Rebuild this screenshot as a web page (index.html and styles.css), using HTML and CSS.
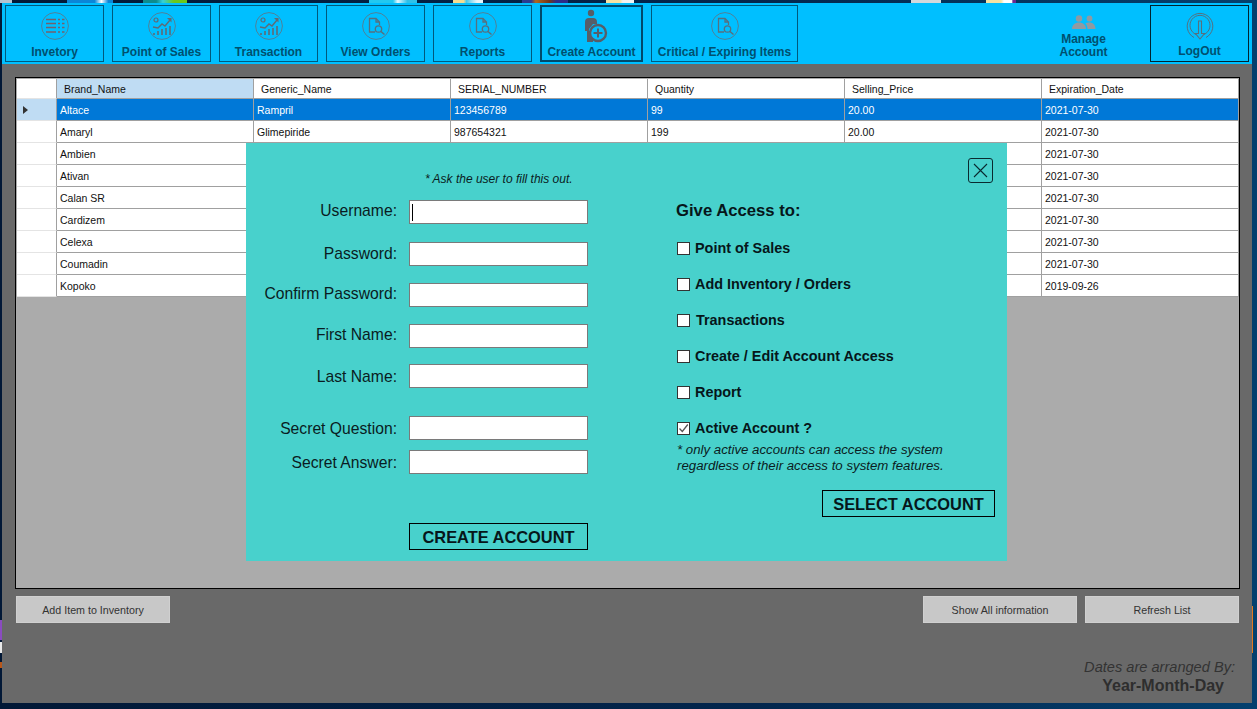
FILE: index.html
```html
<!DOCTYPE html>
<html lang="en">
<head>
<meta charset="utf-8">
<title>Create Account</title>
<link rel="stylesheet" href="styles.css">
</head>
<body>
<svg class="defs" width="0" height="0" aria-hidden="true">
  <symbol id="i-list" viewBox="0 0 28 28">
    <circle cx="14" cy="14" r="13.4" fill="none" stroke="#4f8199" stroke-width="1"/>
    <g fill="none" stroke="#75606c" stroke-width="1.3">
      <path d="M5 7.500h10M17 7.500h2M21 7.500h2.500M5 11.500h10M17 11.500h2M21 11.500h2.500M5 15.500h10M17 15.500h2M21 15.500h2.500M5 20h10M17 20h2M21 20h2.500"/>
    </g>
  </symbol>
  <symbol id="i-chart" viewBox="0 0 28 28">
    <circle cx="14" cy="14" r="13.4" fill="none" stroke="#4f8199" stroke-width="1"/>
    <circle cx="8" cy="8" r="2" fill="none" stroke="#5f6a76" stroke-width="1.2"/>
    <path d="M5 15l5 1 4-4 3 2 5-6" fill="none" stroke="#5f6a76" stroke-width="1.4"/>
    <path d="M19 6h4.500v4.500z" fill="#5f6a76"/>
    <path d="M6 23v-2M10 23v-4M14 23v-6M18 23v-7M22 23v-9" fill="none" stroke="#5f6a76" stroke-width="1.6"/>
  </symbol>
  <symbol id="i-doc" viewBox="0 0 28 28">
    <circle cx="14" cy="14" r="13.4" fill="none" stroke="#4f8199" stroke-width="1"/>
    <path d="M13 20H7.500V6.500h6.500l3.500 3.500v3M14 6.500V10h3.500" fill="none" stroke="#56707f" stroke-width="1.300"/>
    <circle cx="16.500" cy="17" r="3.200" fill="none" stroke="#56707f" stroke-width="1.300"/>
    <path d="M19 19.500l3.500 3" stroke="#56707f" stroke-width="1.600"/>
  </symbol>
  <symbol id="i-new" viewBox="0 0 24 34">
    <circle cx="6" cy="4" r="3.200" fill="#565e68"/>
    <path d="M0 13a4 4 0 0 1 4-4h4a4 4 0 0 1 4 4v2H8L4 20v13H2V22H0z" fill="#565e68"/>
    <path d="M2 22h6v11H2z" fill="#565e68"/>
    <circle cx="13" cy="24" r="8" fill="#00bfff" stroke="#565e68" stroke-width="2.400"/>
    <path d="M13 19.500v9M8.500 24h9" stroke="#565e68" stroke-width="2"/>
  </symbol>
  <symbol id="i-people" viewBox="0 0 24 15">
    <circle cx="7" cy="3.500" r="3.200" fill="#8f9aa2"/>
    <circle cx="17.500" cy="3.500" r="2.900" fill="#8f9aa2"/>
    <path d="M0 14c0-4 3-6.500 7-6.500s7 2.500 7 6.500z" fill="#8f9aa2"/>
    <path d="M15.500 14c0-2.500-.8-4.500-2.200-5.800 1-.5 2.500-.7 4-.7 3.800 0 6.200 2.500 6.200 6.500z" fill="#8f9aa2"/>
  </symbol>
  <symbol id="i-logout" viewBox="0 0 28 30">
    <path d="M8 25.500a12.800 12.800 0 1 1 12 0M10 22.500a10 10 0 1 1 8 0" fill="none" stroke="#56707f" stroke-width="1"/>
    <path d="M12.500 9h3v12.500h3L14 27l-4.500-5.500h3z" fill="none" stroke="#56707f" stroke-width="1.100"/>
  </symbol>
</svg>

<div class="wall">
  <span class="chip chip-a"></span><span class="chip chip-b"></span><span class="chip chip-c"></span><span class="chip chip-d"></span><span class="chip chip-e"></span><span class="chip chip-f"></span><span class="chip chip-g"></span><span class="chip chip-h"></span><span class="chip chip-i"></span>
</div>
<span class="edge edge-purple"></span>
<span class="edge edge-white"></span>
<span class="edge edge-orange"></span>
<span class="edge edge-right"></span>

<div class="app">
  <nav class="toolbar">
    <button class="tool"><svg class="ico"><use href="#i-list"/></svg><span class="tool-text">Invetory</span></button>
    <button class="tool"><svg class="ico"><use href="#i-chart"/></svg><span class="tool-text">Point of Sales</span></button>
    <button class="tool"><svg class="ico"><use href="#i-chart"/></svg><span class="tool-text">Transaction</span></button>
    <button class="tool"><svg class="ico"><use href="#i-doc"/></svg><span class="tool-text">View Orders</span></button>
    <button class="tool"><svg class="ico"><use href="#i-doc"/></svg><span class="tool-text">Reports</span></button>
    <button class="tool tool-active"><svg class="ico-new"><use href="#i-new"/></svg><span class="tool-text">Create Account</span></button>
    <button class="tool tool-wide"><svg class="ico"><use href="#i-doc"/></svg><span class="tool-text">Critical / Expiring Items</span></button>
    <button class="tool tool-plain"><svg class="ico-people"><use href="#i-people"/></svg><span class="tool-text tool-text-stack">Manage<br>Account</span></button>
    <button class="tool tool-logout"><svg class="ico-logout"><use href="#i-logout"/></svg><span class="tool-text">LogOut</span></button>
  </nav>

  <main class="content">
    <div class="grid-box">
      <table class="grid">
        <thead>
          <tr><th class="rowhead"></th><th class="col-on">Brand_Name</th><th>Generic_Name</th><th>SERIAL_NUMBER</th><th>Quantity</th><th>Selling_Price</th><th>Expiration_Date</th></tr>
        </thead>
        <tbody>
          <tr class="selected"><td class="rowhead"><span class="arrow"></span></td><td>Altace</td><td>Rampril</td><td>123456789</td><td>99</td><td>20.00</td><td>2021-07-30</td></tr>
          <tr><td class="rowhead"></td><td>Amaryl</td><td>Glimepiride</td><td>987654321</td><td>199</td><td>20.00</td><td>2021-07-30</td></tr>
          <tr><td class="rowhead"></td><td>Ambien</td><td></td><td></td><td></td><td></td><td>2021-07-30</td></tr>
          <tr><td class="rowhead"></td><td>Ativan</td><td></td><td></td><td></td><td></td><td>2021-07-30</td></tr>
          <tr><td class="rowhead"></td><td>Calan SR</td><td></td><td></td><td></td><td></td><td>2021-07-30</td></tr>
          <tr><td class="rowhead"></td><td>Cardizem</td><td></td><td></td><td></td><td></td><td>2021-07-30</td></tr>
          <tr><td class="rowhead"></td><td>Celexa</td><td></td><td></td><td></td><td></td><td>2021-07-30</td></tr>
          <tr><td class="rowhead"></td><td>Coumadin</td><td></td><td></td><td></td><td></td><td>2021-07-30</td></tr>
          <tr><td class="rowhead"></td><td>Kopoko</td><td></td><td></td><td></td><td></td><td>2019-09-26</td></tr>
        </tbody>
      </table>
    </div>

    <div class="actions">
      <button class="act">Add Item to Inventory</button>
      <span class="act-space"></span>
      <button class="act">Show All information</button>
      <button class="act">Refresh List</button>
    </div>

    <div class="note">
      <div class="note-a">Dates are arranged By:</div>
      <div class="note-b">Year-Month-Day</div>
    </div>
  </main>

  <section class="modal">
    <button class="close" aria-label="Close"><svg width="15" height="15" viewBox="0 0 15 15"><path d="M1 1l13 13M14 1L1 14" stroke="#0a2a30" stroke-width="1.100" fill="none"/></svg></button>
    <div class="form-col">
      <p class="hint">* Ask the user to fill this out.</p>
      <label class="row"><span class="row-label lift">Username:</span><input class="field field-focus" type="text"></label>
      <label class="row gap-18"><span class="row-label">Password:</span><input class="field" type="password"></label>
      <label class="row gap-17"><span class="row-label lift">Confirm Password:</span><input class="field" type="password"></label>
      <label class="row gap-17"><span class="row-label lift">First Name:</span><input class="field" type="text"></label>
      <label class="row gap-16"><span class="row-label drop">Last Name:</span><input class="field" type="text"></label>
      <label class="row gap-28"><span class="row-label drop">Secret Question:</span><input class="field" type="text"></label>
      <label class="row gap-10"><span class="row-label drop">Secret Answer:</span><input class="field" type="text"></label>
      <button class="outline outline-create">CREATE ACCOUNT</button>
    </div>
    <div class="access-col">
      <h2 class="access-title">Give Access to:</h2>
      <ul class="checks">
        <li class="check"><span class="box"></span>Point of Sales</li>
        <li class="check"><span class="box"></span>Add Inventory / Orders</li>
        <li class="check"><span class="box"></span><span class="nudge">Transactions</span></li>
        <li class="check"><span class="box"></span>Create / Edit Account Access</li>
        <li class="check"><span class="box"></span>Report</li>
        <li class="check"><span class="box"><svg width="11" height="11" viewBox="0 0 11 11"><path d="M1.500 5.500l2.800 3L9.800 1.500" fill="none" stroke="#555" stroke-width="1.300"/></svg></span>Active Account ?</li>
      </ul>
      <p class="warn">* only active accounts can access the system<br>regardless of their access to system features.</p>
      <button class="outline outline-select">SELECT ACCOUNT</button>
    </div>
  </section>
</div>
</body>
</html>
```

FILE: styles.css
```css
* { box-sizing: border-box; }

html, body { margin: 0; height: 100%; }

body {
  width: 1257px;
  height: 709px;
  overflow: hidden;
  padding: 3px 5px 6px 2px;
  position: relative;
  background: linear-gradient(90deg, #021836 0%, #03264d 60%, #04406e 100%);
  font-family: "Liberation Sans", Arial, sans-serif;
}

.defs { position: absolute; }

/* desktop icons peeking out around the window */
.wall { position: absolute; left: 0; top: 0; right: 0; height: 3px; display: flex; }
.chip { display: block; height: 3px; }
.chip-a { width: 12px; background: #b5c3cf; }
.chip-b { width: 46px; margin-left: 55px; background: linear-gradient(90deg, #0b86d8 60%, #fff 75%, #0b86d8 90%); }
.chip-c { width: 44px; margin-left: 30px; background: linear-gradient(90deg, #0e8c8c 30%, #35d0d8 45%, #6cc81c 70%); }
.chip-d { width: 48px; margin-left: 182px; background: linear-gradient(90deg, #22c8f0 50%, #e8f8ff 60%, #30c0e8 80%); }
.chip-e { width: 30px; margin-left: 36px; background: linear-gradient(90deg, #f5dc90 35%, #4cc8e8 45%, #e8f4f8 80%); }
.chip-f { width: 46px; margin-left: 39px; background: linear-gradient(90deg, #2a3a90 20%, #b0681c 30%, #70341c 60%, #2c2c88 75%); }
.chip-g { width: 28px; margin-left: 38px; background: linear-gradient(90deg, #f5e2a4 50%, #f2f2f2 60%); }
.chip-h { width: 30px; margin-left: 277px; background: #d4d8dc; }
.chip-i { width: 30px; margin-left: 45px; background: linear-gradient(90deg, #f5e2a4 50%, #fff 60%, #fff 85%, #6a2a90 90%); }

.edge { position: absolute; display: block; }
.edge-purple { left: 0; top: 620px; width: 2px; height: 20px; background: #8a4cc0; }
.edge-white { left: 0; top: 642px; width: 2px; height: 11px; background: #e8e8e8; }
.edge-orange { left: 0; top: 662px; width: 2px; height: 6px; background: #b8581c; }
.edge-right { left: 1252px; top: 606px; width: 1px; height: 47px; background: #e07a20; }

.app {
  position: relative;
  width: 1250px;
  height: 700px;
  background: #696969;
  display: flex;
  flex-direction: column;
}

/* toolbar */
.toolbar {
  height: 61px;
  flex: none;
  display: flex;
  gap: 8px;
  padding: 2px 3px;
  background: #00bfff;
}

.tool {
  width: 99px;
  height: 57px;
  padding: 6px 0 2px;
  display: flex;
  flex-direction: column;
  align-items: center;
  background: #00bfff;
  border: 1px solid #00597c;
  font-family: inherit;
  color: #00506f;
}

.tool-text {
  margin-top: auto;
  font-size: 12px;
  line-height: 14px;
  font-weight: 700;
  white-space: nowrap;
}

.tool-active { width: 103px; border: 2px solid #00496a; padding: 2px 0 1px; }
.tool-wide { width: 147px; }
.tool-plain { margin-left: auto; border-color: transparent; padding: 9px 0 2px; margin-right: 9px; }
.tool-text-stack { line-height: 13px; }
.tool-logout { border-color: #00222f; padding: 6px 0 3px; }

.ico { width: 28px; height: 28px; flex: none; }
.ico-new { width: 24px; height: 34px; flex: none; margin-left: 10px; }
.ico-people { width: 24px; height: 15px; flex: none; }
.ico-logout { width: 28px; height: 30px; flex: none; }

/* main */
.content { flex: 1; padding: 13px 12px 0 13px; }

.grid-box {
  height: 512px;
  padding: 1px 0 0 1px;
  border: 1px solid #000;
  background: #ababab;
}

.grid {
  border-collapse: separate;
  border-spacing: 0;
  table-layout: fixed;
  width: 1222px;
  font-size: 10.500px;
  color: #111;
}

.grid th, .grid td {
  width: 197px;
  height: 22px;
  padding: 0 0 0 3px;
  text-align: left;
  font-weight: 400;
  background: #fff;
  border-right: 1px solid #a0a0a0;
  border-bottom: 1px solid #a0a0a0;
  white-space: nowrap;
  overflow: hidden;
}

.grid th { height: 20px; padding-left: 7px; font-size: 10.500px; }

.grid th.rowhead, .grid td.rowhead {
  width: 40px;
  padding: 0 0 0 6px;
  border-bottom-color: #e4e4e4;
}

.grid th.col-on { background: #bfdcf3; }

.selected td { background: #0078d7; color: #fff; }
.grid .selected td.rowhead { background: #bfdcf3; }

.arrow {
  display: block;
  width: 0;
  height: 0;
  border-left: 5px solid #333;
  border-top: 4px solid transparent;
  border-bottom: 4px solid transparent;
}

.actions { display: flex; gap: 8px; margin: 7px 0 0 1px; height: 27px; width: 1223px; }
.act-space { flex: 1; }

.act {
  width: 154px;
  height: 27px;
  padding: 0;
  background: #c8c8c8;
  border: 1px solid #d0d0d0;
  font-family: inherit;
  font-size: 10.700px;
  color: #333;
}

.note {
  width: 1220px;
  margin-top: 35px;
  text-align: right;
  color: #333;
}

.note-a { font-size: 14.600px; line-height: 18px; font-style: italic; }
.note-b { font-size: 16px; line-height: 18px; font-weight: 700; padding: 1px 11px 0 0; color: #2e2e2e; }

/* modal */
.modal {
  position: absolute;
  left: 244px;
  top: 140px;
  width: 761px;
  height: 418px;
  display: flex;
  padding-top: 28px;
  background: #48d1cc;
  color: #0a1c22;
}

.close {
  position: absolute;
  left: 722px;
  top: 15px;
  width: 25px;
  height: 25px;
  padding: 0;
  display: flex;
  align-items: center;
  justify-content: center;
  background: transparent;
  border: 1px solid #0a2a30;
  border-radius: 3px;
}

.form-col { width: 342px; flex: none; }

.hint {
  margin: 0 0 13px 179px;
  font-size: 12px;
  line-height: 16px;
  font-style: italic;
  white-space: nowrap;
}

.row {
  display: grid;
  grid-template-columns: 151px 179px;
  column-gap: 12px;
  align-items: center;
  height: 24px;
}

.gap-10 { margin-top: 10px; }
.gap-16 { margin-top: 16px; }
.gap-17 { margin-top: 17px; }
.gap-18 { margin-top: 18px; }
.gap-28 { margin-top: 28px; }

.row-label { font-size: 15.700px; line-height: 20px; text-align: right; white-space: nowrap; }
.lift { padding-bottom: 2px; }
.drop { padding-top: 2px; }

.field {
  width: 179px;
  height: 24px;
  padding: 0;
  background: #fff;
  border: 1px solid #7a7a7a;
  border-radius: 0;
  outline: none;
}

.field-focus {
  background: linear-gradient(#000, #000) no-repeat 2px 3px / 1px 17px, #fff;
}

.outline {
  display: block;
  height: 27px;
  padding: 2px 0 0;
  background: transparent;
  border: 1px solid #000;
  font-family: inherit;
  font-size: 16.400px;
  font-weight: 700;
  color: #06161a;
  white-space: nowrap;
}

.outline-create { width: 179px; margin: 49px 0 0 163px; }
.outline-select { width: 173px; margin: 16px 0 0 145px; }

.access-col { margin-left: 89px; width: 318px; padding-top: 30px; }

.access-title {
  margin: 0 0 17px -1px;
  font-size: 16.700px;
  line-height: 20px;
  font-weight: 700;
  color: #06161a;
  white-space: nowrap;
}

.checks {
  list-style: none;
  margin: 0;
  padding: 0;
  display: flex;
  flex-direction: column;
  gap: 16px;
}

.check {
  display: flex;
  align-items: center;
  height: 20px;
  font-size: 14.400px;
  font-weight: 700;
  color: #06161a;
  white-space: nowrap;
}

.box {
  width: 13px;
  height: 13px;
  flex: none;
  margin: 0 5px 0 0;
  display: flex;
  align-items: center;
  justify-content: center;
  background: #fff;
  border: 1px solid #333;
}

.nudge { margin-left: 1px; }

.warn {
  margin: 4px 0 0;
  font-size: 13.250px;
  line-height: 16px;
  font-style: italic;
  white-space: nowrap;
}
```
